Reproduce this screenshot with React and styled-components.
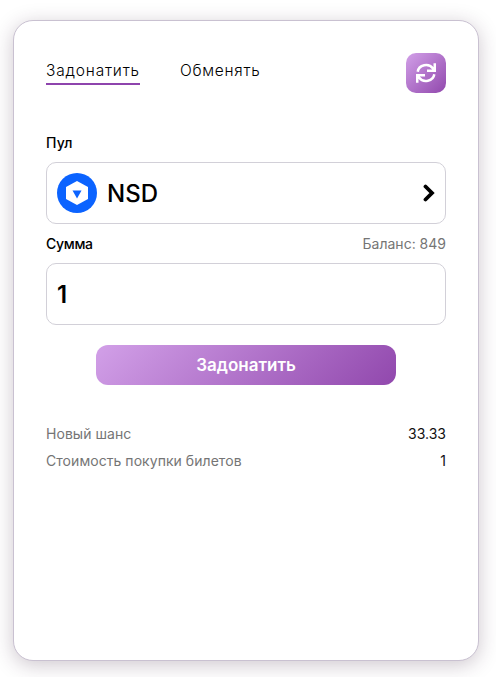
import React from "react";
import styled, { createGlobalStyle } from "styled-components";

const GlobalStyle = createGlobalStyle`
  * { box-sizing: border-box; }
  body { margin: 0; background: #fff; color: #000; font-family: Inter, sans-serif; }
  button, input { font: inherit; color: inherit; }
`;

const Page = styled.main`
  height: 677px;
  padding: 20px 17px 16px 13px;
  overflow: hidden;
`;

const Card = styled.section`
  height: 641px;
  padding: 32px;
  border: 1px solid #c9c1d1;
  border-radius: 20px;
  background: #fff;
  box-shadow: 0 4px 20px rgba(60, 30, 60, 0.25);
`;

const Header = styled.header`
  display: flex;
  align-items: flex-start;
  height: 80px;
`;

const Tabs = styled.nav`
  display: flex;
  flex: 1;
  gap: 40px;
  padding-top: 7px;
`;

const Tab = styled.button`
  width: ${(p) => p.$width}px;
  height: 25px;
  padding: 0 0 2px;
  border: 0;
  border-bottom: 2px solid ${(p) => (p.$active ? "#8e44ad" : "transparent")};
  background: none;
  font: 300 15.5px/21px Inter, sans-serif;
  letter-spacing: ${(p) => p.$tracking}px;
  text-align: left;
  white-space: nowrap;
`;

const RefreshButton = styled.button`
  display: grid;
  place-items: center;
  width: 40px;
  height: 40px;
  padding: 0;
  border: 0;
  border-radius: 10px;
  background: linear-gradient(135deg, #d2a0e8, #9148ad);
`;

const LabelRow = styled.div`
  display: flex;
  align-items: ${(p) => p.$align || "center"};
  justify-content: space-between;
  height: ${(p) => p.$height}px;
`;

const Label = styled.label`
  font: 500 14px/20px Inter, sans-serif;
  letter-spacing: ${(p) => p.$tracking || 0}px;
`;

const Balance = styled.span`
  color: #757575;
  font-size: 14px;
`;

const Field = styled.div`
  display: flex;
  align-items: center;
  gap: 10px;
  height: 62px;
  padding: 0 10px;
  border: 1px solid #d2d0d8;
  border-radius: 10px;
`;

const PoolName = styled.span`
  flex: 1;
  font-size: 24px;
  font-weight: 500;
`;

const AmountInput = styled.input`
  width: 100%;
  padding: 0;
  border: 0;
  outline: 0;
  background: transparent;
  font-size: 24px;
  font-weight: 600;
`;

const SubmitButton = styled.button`
  display: block;
  width: 300px;
  height: 40px;
  margin: 20px auto 39px;
  padding: 0;
  border: 0;
  border-radius: 12px;
  background: linear-gradient(135deg, #d2a0e8, #9148ad);
  color: #fff;
  font-size: 17px;
  font-weight: 600;
`;

const InfoRow = styled.div`
  display: flex;
  justify-content: space-between;
  height: 27px;
  color: #111;
  font-size: 14px;
  line-height: 20px;
`;

const InfoName = styled.span`
  color: #757575;
  letter-spacing: 0.05px;
`;

const RefreshIcon = () => (
  <svg width="20" height="20" viewBox="0 0 20 20" fill="none" stroke="#fff" strokeWidth="2.5">
    <path d="M1.7 8.8A8.4 7.7 0 0 1 17 5.5L18.3 7.5M18.75 0.2V7.8H11M18.3 11.2A8.4 7.7 0 0 1 3 14.5L1.7 12.5M1.25 19.8V12.2H9" />
  </svg>
);

const PoolLogo = () => (
  <svg width="40" height="40" viewBox="0 0 40 40">
    <circle cx="20" cy="20" r="20" fill="#0b63ff" />
    <path d="M20 8L31 14V26L20 32L9 26V14Z" fill="#fff" />
    <path d="M15.5 17.5H24.5L20 25.5Z" fill="#0b63ff" />
  </svg>
);

const ChevronIcon = () => (
  <svg width="12" height="18" viewBox="0 0 12 18" fill="none" stroke="#000" strokeWidth="3.8">
    <path d="M2.5 2.5L9 9L2.5 15.5" strokeLinecap="round" />
  </svg>
);

export default function App() {
  return (
    <>
      <GlobalStyle />
      <Page>
        <Card>
          <Header>
            <Tabs>
              <Tab $active $width={94} $tracking={0.81}>Задонатить</Tab>
              <Tab $width={81} $tracking={0.72}>Обменять</Tab>
            </Tabs>
            <RefreshButton aria-label="Обновить"><RefreshIcon /></RefreshButton>
          </Header>
          <LabelRow $height={29} $align="flex-start"><Label $tracking={0.2}>Пул</Label></LabelRow>
          <Field>
            <PoolLogo />
            <PoolName>NSD</PoolName>
            <ChevronIcon />
          </Field>
          <LabelRow $height={39}>
            <Label htmlFor="amount" $tracking={-0.3}>Сумма</Label>
            <Balance>Баланс: 849</Balance>
          </LabelRow>
          <Field><AmountInput id="amount" defaultValue="1" /></Field>
          <SubmitButton>Задонатить</SubmitButton>
          <InfoRow><InfoName>Новый шанс</InfoName><span>33.33</span></InfoRow>
          <InfoRow><InfoName>Стоимость покупки билетов</InfoName><span>1</span></InfoRow>
        </Card>
      </Page>
    </>
  );
}
